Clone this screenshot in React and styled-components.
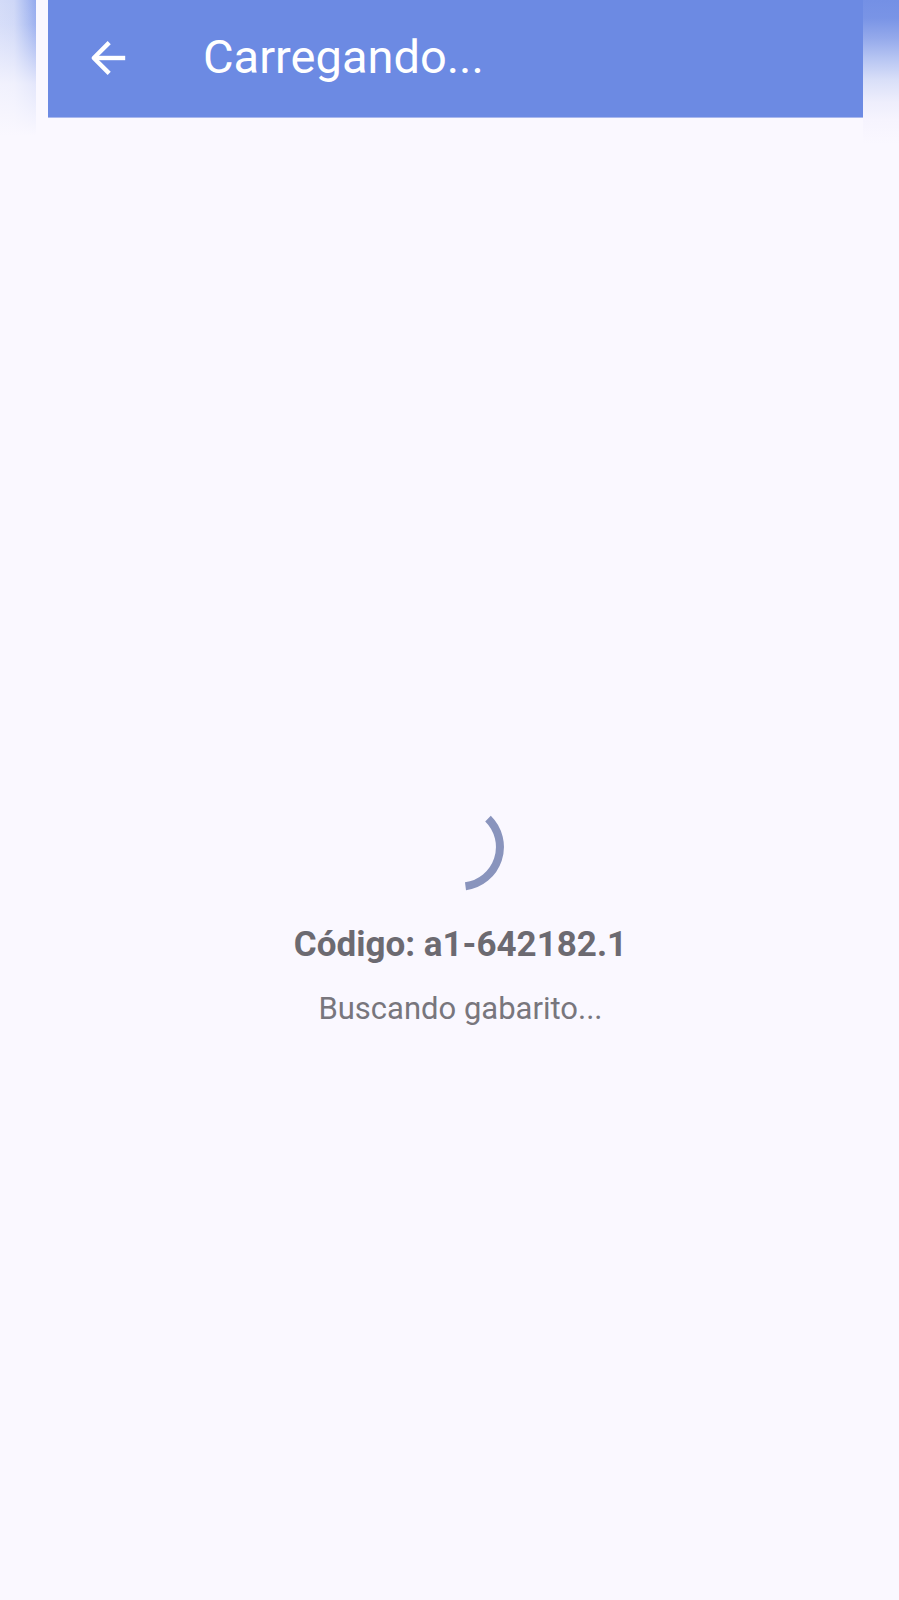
import React from 'react';
import styled, { createGlobalStyle } from 'styled-components';

const GlobalStyle = createGlobalStyle`
  * {
    box-sizing: border-box;
  }

  body {
    margin: 0;
    background: #faf8ff;
    font-family: Roboto, sans-serif;
  }
`;

const App = () => {
  return (
    <Screen>
      <GlobalStyle />
      <Top>
        <LeftGlow />
        <AppBar>
          <BackButton type="button" aria-label="Voltar">
            <svg width="36" height="36" viewBox="0 0 36 36" fill="none" stroke="#fff" strokeWidth="4.4">
              <path d="M35.2 18H5" />
              <path d="M19.2 2.6L3.8 18L19.2 33.4" strokeLinejoin="round" />
            </svg>
          </BackButton>
          <Title>Carregando...</Title>
        </AppBar>
        <RightGlow />
      </Top>
      <Content>
        <Spinner role="status" aria-label="Carregando">
          <svg width="88" height="88" viewBox="0 0 88 88" fill="none">
            <path d="M71 15.6A39.6 39.6 0 0 1 48.5 83.2" stroke="#8994bd" strokeWidth="8" />
          </svg>
        </Spinner>
        <Code>Código: a1-642182.1</Code>
        <Message>Buscando gabarito...</Message>
      </Content>
    </Screen>
  );
};

const Screen = styled.div`
  display: flex;
  flex-direction: column;
  min-height: 100vh;
  background: #faf8ff;
`;

const Top = styled.div`
  display: grid;
  grid-template-columns: 36px 1fr 36px;
  height: 144px;
`;

/* Soft colour bleeding out on both sides of the bar */
const LeftGlow = styled.div`
  background:
    linear-gradient(to bottom, rgba(250, 248, 255, 0) 0, rgba(250, 248, 255, 0.1) 24px, rgba(250, 248, 255, 0.4) 52px, rgba(250, 248, 255, 0.78) 84px, #faf8ff 136px),
    linear-gradient(to right, #d3dbf8 0, #ced7f7 14px, #b6c5f3 23px, #94aaee 36px);
`;

const RightGlow = styled.div`
  background: linear-gradient(to bottom, #7490e5 0, #7994e6 18px, #94a9eb 38px, #b9c7f3 60px, #d9dff8 80px, #eeeefc 102px, #f6f4fe 120px, #faf8ff 144px);
`;

const AppBar = styled.header`
  display: flex;
  align-items: center;
  gap: 67px;
  height: 118px;
  margin-left: 12px;
  padding: 0 32px 2px;
  background: #6c8ae3;
  border-bottom: 1px solid #a9b8ee;
`;

const BackButton = styled.button`
  display: flex;
  align-items: center;
  justify-content: center;
  width: 56px;
  height: 56px;
  padding: 0;
  border: 0;
  background: none;
  cursor: pointer;
`;

const Title = styled.h1`
  margin: 0;
  padding-bottom: 2px;
  color: #fff;
  font-size: 47px;
  font-weight: 400;
  line-height: 56px;
`;

const Content = styled.main`
  display: flex;
  flex: 1;
  flex-direction: column;
  align-items: center;
  justify-content: center;
  padding: 88px 0 0 22px;
`;

const Spinner = styled.div`
  height: 88px;
  margin-bottom: 32px;
`;

const Code = styled.p`
  margin: 0 0 22px;
  color: #6c6a71;
  font-size: 35px;
  font-weight: 700;
  line-height: 44px;
`;

const Message = styled.p`
  margin: 0;
  color: #78767d;
  font-size: 31px;
  line-height: 40px;
`;

export default App;
